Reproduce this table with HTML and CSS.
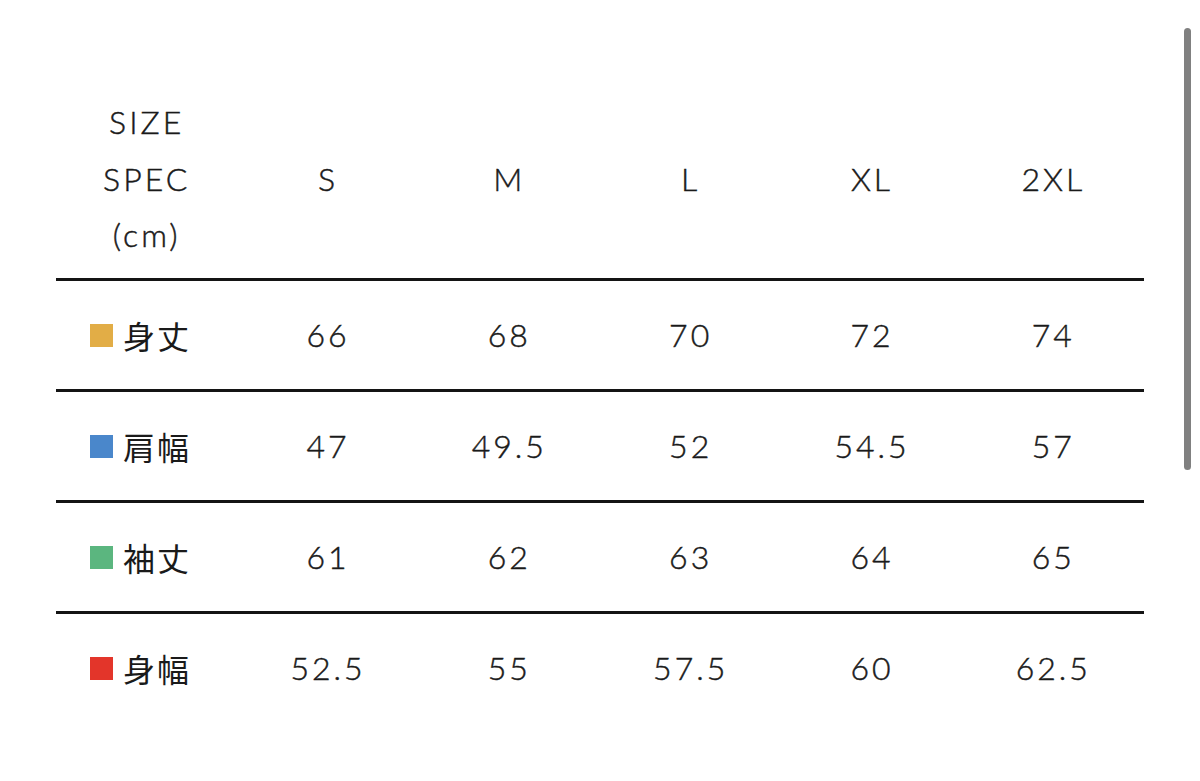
FILE: index.html
```html
<!DOCTYPE html>
<html lang="ja">
<head>
<meta charset="utf-8">
<title>Size Spec</title>
<link rel="stylesheet" href="styles.css">
</head>
<body>
<div class="page">
  <div class="spec">
    <div class="row head">
      <div class="cell label-head">SIZE<br>SPEC<br>(cm)</div>
      <div class="cell">S</div>
      <div class="cell">M</div>
      <div class="cell">L</div>
      <div class="cell">XL</div>
      <div class="cell">2XL</div>
    </div>
    <div class="row">
      <div class="cell label"><span class="sw gold"></span><span class="jp">身丈</span></div>
      <div class="cell">66</div>
      <div class="cell">68</div>
      <div class="cell">70</div>
      <div class="cell">72</div>
      <div class="cell">74</div>
    </div>
    <div class="row">
      <div class="cell label"><span class="sw blue"></span><span class="jp">肩幅</span></div>
      <div class="cell">47</div>
      <div class="cell">49.5</div>
      <div class="cell">52</div>
      <div class="cell">54.5</div>
      <div class="cell">57</div>
    </div>
    <div class="row">
      <div class="cell label"><span class="sw green"></span><span class="jp">袖丈</span></div>
      <div class="cell">61</div>
      <div class="cell">62</div>
      <div class="cell">63</div>
      <div class="cell">64</div>
      <div class="cell">65</div>
    </div>
    <div class="row last">
      <div class="cell label"><span class="sw red"></span><span class="jp">身幅</span></div>
      <div class="cell">52.5</div>
      <div class="cell">55</div>
      <div class="cell">57.5</div>
      <div class="cell">60</div>
      <div class="cell">62.5</div>
    </div>
  </div>
</div>
<div class="scrollbar"></div>
</body>
</html>
```

FILE: styles.css
```css
html, body {
  margin: 0;
  padding: 0;
  background: #ffffff;
}
body {
  width: 1200px;
  height: 781px;
  overflow: hidden;
  font-family: "Lato", "Noto Sans CJK JP", sans-serif;
  font-weight: 300;
  color: #1a1a1a;
  -webkit-text-stroke: 0.45px #1a1a1a;
}
.page {
  padding: 94px 56px 0 56px;
}
.spec {
  width: 1088px;
}
.row {
  display: grid;
  grid-template-columns: repeat(6, 1fr);
  height: 108px;
  border-bottom: 3px solid #141414;
}
.row.head {
  height: 184px;
  align-items: start;
}
.row.last {
  border-bottom: none;
}
.cell {
  display: flex;
  align-items: center;
  justify-content: center;
  font-size: 32px;
  letter-spacing: 3px;
  line-height: 1;
}
.row.head .cell {
  height: 170px;
}
.label-head {
  display: block !important;
  text-align: center;
  line-height: 56.5px;
}
.label {
  justify-content: flex-start;
  padding-left: 34px;
  gap: 10px;
}
.jp {
  font-family: "Noto Sans CJK JP", sans-serif;
  font-weight: 400;
  font-size: 32px;
  letter-spacing: 2px;
  line-height: 1;
  -webkit-text-stroke: 0;
}
.sw {
  width: 23px;
  height: 23px;
  flex: none;
}
.gold { background: #e2ad46; }
.blue { background: #4a87cb; }
.green { background: #5bb67f; }
.red { background: #e3352a; }
.scrollbar {
  position: fixed;
  left: 1184px;
  top: 28px;
  width: 7px;
  height: 442px;
  border-radius: 4px;
  background: #808080;
}
```
